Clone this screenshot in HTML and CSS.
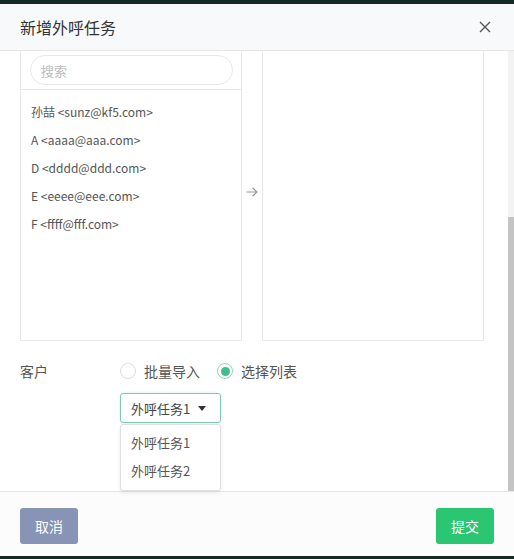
FILE: index.html
```html
<!DOCTYPE html>
<html lang="zh-CN">
<head>
    <meta charset="UTF-8">
    <meta name="viewport" content="width=device-width, initial-scale=1.0">
    <title>新增外呼任务</title>
    <link rel="stylesheet" href="styles.css">
</head>
<body>

    <div class="modal">
        <div class="modal-header">
            <h3>新增外呼任务</h3>
            <span class="close-btn">
                <svg width="12" height="12" viewBox="0 0 12 12"><path d="M1 1L11 11M11 1L1 11" stroke="#555" stroke-width="1.4" fill="none"/></svg>
            </span>
        </div>

        <div class="modal-body">
            <div class="transfer">
                <div class="transfer-panel">
                    <div class="search-wrap">
                        <input type="text" class="search-input" placeholder="搜索">
                    </div>
                    <ul class="contact-list">
                        <li>孙喆 &lt;sunz@kf5.com&gt;</li>
                        <li>A &lt;aaaa@aaa.com&gt;</li>
                        <li>D &lt;dddd@ddd.com&gt;</li>
                        <li>E &lt;eeee@eee.com&gt;</li>
                        <li>F &lt;ffff@fff.com&gt;</li>
                    </ul>
                </div>
                <div class="transfer-arrow">
                    <svg width="12" height="10" viewBox="0 0 12 10"><path d="M0.5 5H11M6.5 0.8L11 5L6.5 9.2" stroke="#999" stroke-width="1.2" fill="none"/></svg>
                </div>
                <div class="transfer-panel"></div>
            </div>

            <div class="form-row">
                <label class="form-label">客户</label>
                <div class="radio-group">
                    <label class="radio"><span class="radio-circle"></span>批量导入</label>
                    <label class="radio checked"><span class="radio-circle"></span>选择列表</label>
                </div>
            </div>

            <div class="select-row">
                <div class="select-box">
                    <span>外呼任务1</span>
                    <span class="caret"></span>
                    <ul class="dropdown">
                        <li>外呼任务1</li>
                        <li>外呼任务2</li>
                    </ul>
                </div>
            </div>

            <div class="scrollbar"><div class="scroll-thumb"></div></div>
        </div>

        <div class="modal-footer">
            <button class="btn btn-cancel">取消</button>
            <button class="btn btn-submit">提交</button>
        </div>
    </div>

</body>
</html>
```

FILE: styles.css
```css
/* General Styles */
body {
    margin: 0;
    padding: 4px 0 3px;
    background-color: #142a24;
    font-family: "Noto Sans CJK SC", "Noto Sans", sans-serif;
    color: #555;
}

.modal {
    width: 514px;
    height: 552px;
    background: white;
    display: flex;
    flex-direction: column;
    overflow: hidden;
}

.modal-header {
    height: 46px;
    flex-shrink: 0;
    display: flex;
    align-items: center;
    justify-content: space-between;
    padding: 0 23px 0 20px;
    background-color: #f8f9fa;
    border-bottom: 1px solid #e6e6e6;
}

.modal-header h3 {
    margin: 0;
    font-size: 16px;
    font-weight: normal;
    color: #333;
}

.close-btn {
    display: flex;
}

.modal-body {
    position: relative;
    height: 440px;
    flex-shrink: 0;
    padding: 0 30px 0 20px;
}

/* Transfer */
.transfer {
    display: flex;
}

.transfer-panel {
    width: 220px;
    height: 289px;
    border: 1px solid #e8e8e8;
    border-top: none;
}

.transfer-arrow {
    width: 20px;
    display: flex;
    justify-content: center;
    padding-top: 136px;
}

.search-wrap {
    padding: 4px 8px 4px 9px;
    border-bottom: 1px solid #e8e8e8;
}

.search-input {
    width: 100%;
    height: 30px;
    box-sizing: border-box;
    border: 1px solid #e8e8e8;
    border-radius: 15px;
    padding: 0 10px;
    font-family: inherit;
    font-size: 13px;
    outline: none;
}

.search-input::placeholder {
    color: #bbb;
}

.contact-list {
    list-style: none;
    margin: 0;
    padding: 8px 0 0 10px;
}

.contact-list li {
    line-height: 28px;
    font-size: 12px;
    color: #555;
}

/* Form */
.form-row {
    display: flex;
    align-items: center;
    margin-top: 20px;
    height: 20px;
    font-size: 14px;
}

.form-label {
    width: 100px;
    color: #555;
}

.radio-group {
    display: flex;
    gap: 17px;
}

.radio {
    display: flex;
    align-items: center;
    color: #555;
}

.radio-circle {
    width: 14px;
    height: 14px;
    border: 1px solid #dcdcdc;
    border-radius: 50%;
    margin-right: 8px;
    position: relative;
}

.radio.checked .radio-circle {
    border-color: #8fd6b9;
}

.radio.checked .radio-circle::after {
    content: "";
    position: absolute;
    left: 2.5px;
    top: 2.5px;
    width: 9px;
    height: 9px;
    border-radius: 50%;
    background-color: #3fbf8c;
}

.select-row {
    margin: 12px 0 0 100px;
}

.select-box {
    position: relative;
    height: 28px;
    border: 1px solid #7fcbb0;
    border-radius: 3px;
    box-shadow: 0 0 3px rgba(63, 191, 140, 0.25);
    display: flex;
    align-items: center;
    padding-left: 10px;
    width: 89px;
    font-size: 13px;
    color: #444;
}

.caret {
    margin-left: 8px;
    width: 0;
    height: 0;
    border-left: 4px solid transparent;
    border-right: 4px solid transparent;
    border-top: 5px solid #333;
}

.dropdown {
    position: absolute;
    left: -1px;
    top: 30px;
    width: 99px;
    margin: 0;
    padding: 4px 0 5px;
    list-style: none;
    background: white;
    border: 1px solid #e0e0e0;
    border-radius: 3px;
    box-shadow: 0 2px 4px rgba(0, 0, 0, 0.08);
}

.dropdown li {
    line-height: 28px;
    padding-left: 10px;
    color: #555;
}

/* Scrollbar */
.scrollbar {
    position: absolute;
    right: 0;
    top: 0;
    width: 6px;
    height: 100%;
    background-color: #f3f3f3;
}

.scroll-thumb {
    position: absolute;
    bottom: 0;
    width: 6px;
    height: 274px;
    background-color: #c4c4c4;
}

/* Footer */
.modal-footer {
    flex: 1;
    display: flex;
    justify-content: space-between;
    padding: 16px 20px 0;
    border-top: 1px solid #e6e6e6;
    background-color: #fcfcfc;
}

.btn {
    width: 58px;
    height: 36px;
    border: none;
    border-radius: 3px;
    color: white;
    font-family: inherit;
    font-size: 14px;
    cursor: pointer;
}

.btn-cancel {
    background-color: #8794b5;
}

.btn-submit {
    background-color: #2bc672;
}
```
